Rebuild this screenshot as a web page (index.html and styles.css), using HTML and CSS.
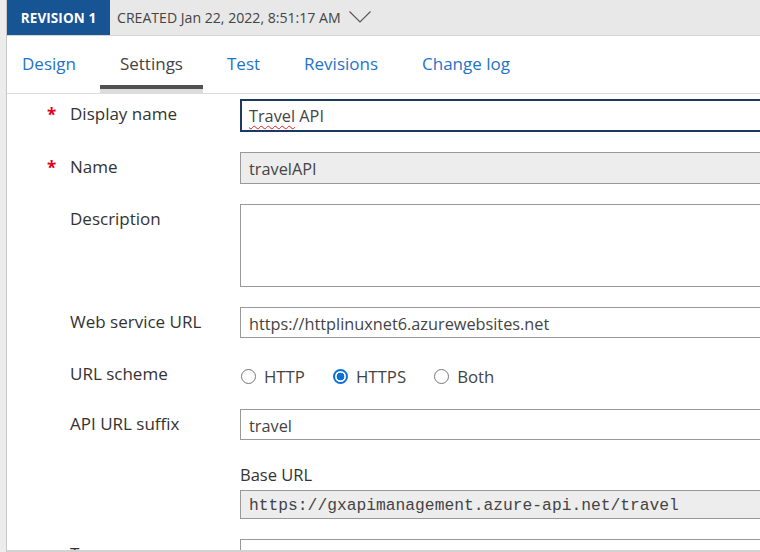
FILE: index.html
```html
<!DOCTYPE html>
<html>
<head>
<meta charset="utf-8">
<link rel="stylesheet" href="styles.css">
</head>
<body>
<div class="shell">
  <div class="main">
    <div class="header">
      <div class="badge">REVISION 1</div>
      <div class="created">CREATED Jan 22, 2022, 8:51:17 AM</div>
      <svg class="chev" width="22" height="12" viewBox="0 0 22 12"><polyline points="0.5,0.5 11,11 21.5,0.5" fill="none" stroke="#555" stroke-width="1.1"/></svg>
    </div>
    <div class="tabs">
      <div class="tab">Design</div>
      <div class="tab active">Settings</div>
      <div class="tab">Test</div>
      <div class="tab">Revisions</div>
      <div class="tab">Change log</div>
    </div>
    <div class="form">
      <div class="row">
        <div class="req">*</div>
        <div class="label">Display name</div>
        <div class="field focus"><span class="spell">Travel</span> API</div>
      </div>
      <div class="row">
        <div class="req">*</div>
        <div class="label">Name</div>
        <div class="field ro">travelAPI</div>
      </div>
      <div class="row">
        <div class="req"></div>
        <div class="label">Description</div>
        <div class="field area"></div>
      </div>
      <div class="row">
        <div class="req"></div>
        <div class="label">Web service URL</div>
        <div class="field">https://httplinuxnet6.azurewebsites.net</div>
      </div>
      <div class="row radios-row">
        <div class="req"></div>
        <div class="label">URL scheme</div>
        <div class="radios">
          <div class="opt"><span class="radio"></span>HTTP</div>
          <div class="opt"><span class="radio on"></span>HTTPS</div>
          <div class="opt"><span class="radio"></span>Both</div>
        </div>
      </div>
      <div class="row">
        <div class="req"></div>
        <div class="label">API URL suffix</div>
        <div class="stack">
          <div class="field">travel</div>
          <div class="sublabel">Base URL</div>
          <div class="field ro mono">https://gxapimanagement.azure-api.net/travel</div>
        </div>
      </div>
      <div class="row">
        <div class="req"></div>
        <div class="label">Tags</div>
        <div class="field"><span class="ph">e.g. Booking</span></div>
      </div>
    </div>
  </div>
</div>
</body>
</html>
```
FILE: styles.css
```css
html, body {
  margin: 0;
  padding: 0;
  width: 760px;
  height: 552px;
  overflow: hidden;
  background: #ececec;
  font-family: "Open Sans", "Noto Sans", sans-serif;
}
.shell {
  padding-left: 6px;
  height: 552px;
}
.main {
  height: 550px;
  background: #fff;
  border-left: 1px solid #c8c8c8;
  border-bottom: 2px solid #d2d2d2;
  overflow: hidden;
}
.header {
  height: 35px;
  background: #e8e8e8;
  border-bottom: 1px solid #d6d6d6;
  display: flex;
  align-items: center;
}
.badge {
  background: #175493;
  color: #fff;
  font-weight: 700;
  font-size: 13.5px;
  height: 35px;
  width: 103px;
  display: flex;
  align-items: center;
  justify-content: center;
  letter-spacing: 0.1px;
  flex-shrink: 0;
}
.created {
  margin-left: 7px;
  font-size: 14.1px;
  color: #444;
}
.chev {
  margin-left: 8px;
  margin-top: -1px;
}
.tabs {
  display: flex;
  height: 57px;
  border-bottom: 1px solid #dcdcdc;
  padding-left: 15px;
}
.tab {
  color: #1f73c9;
  font-size: 17px;
  padding: 0 22px;
  line-height: 56px;
  height: 49px;
  flex-shrink: 0;
}
.tab:first-child { padding-left: 0; }
.tab.active {
  color: #444;
  border-bottom: 4px solid #505050;
  box-shadow: 0 4px 0 #dcdcdc;
  padding: 0 20px;
  margin: 0 2px;
}
.form {
  padding: 5px 0 0 40px;
  display: flex;
  flex-direction: column;
  gap: 20px;
}
.row {
  display: flex;
  align-items: flex-start;
}
.req {
  width: 23px;
  flex-shrink: 0;
  color: #e3001b;
  font-size: 17px;
  font-weight: 700;
  line-height: 20px;
  padding-top: 6px;
}
.label {
  width: 170px;
  flex-shrink: 0;
  font-size: 17px;
  color: #333;
  line-height: 20px;
  padding-top: 5px;
}
.field {
  width: 540px;
  height: 31px;
  box-sizing: border-box;
  border: 1px solid #999;
  background: #fff;
  font-size: 16.3px;
  color: #444;
  line-height: 29px;
  padding-top: 2px;
  padding-left: 8px;
  flex-shrink: 0;
  white-space: nowrap;
  overflow: hidden;
}
.field.focus {
  height: 33px;
  border: 2px solid #1d3a5e;
  line-height: 29px;
  padding-top: 1px;
  padding-left: 7px;
}
.field.ro {
  background: #ededed;
  height: 32px;
}
.field.area {
  height: 83px;
}
.spell {
  text-decoration: underline wavy #e02020;
  text-decoration-thickness: 1px;
  text-underline-offset: 3px;
}
.ph {
  color: #888;
  padding-left: 28px;
}
.radios-row {
  height: 30px;
  margin-top: 1px;
}
.radios {
  display: flex;
  align-items: center;
  height: 34px;
  font-size: 16.8px;
  color: #444;
}
.opt {
  display: flex;
  align-items: center;
  margin-right: 27px;
}
.radio {
  width: 15px;
  height: 15px;
  box-sizing: border-box;
  border: 1px solid #777;
  border-radius: 50%;
  margin-right: 8px;
  margin-left: 1px;
  background: #fff;
  display: inline-block;
}
.radio.on {
  border: 2px solid #0d6fd8;
  background: radial-gradient(circle, #0d6fd8 0 3.6px, #fff 4.2px);
}
.stack {
  display: flex;
  flex-direction: column;
}
.sublabel {
  font-size: 16.5px;
  color: #333;
  line-height: 22px;
  margin-top: 24px;
  margin-bottom: 4px;
}
.field.mono {
  font-family: "Liberation Mono", "DejaVu Sans Mono", monospace;
  font-size: 16.3px;
  height: 29px;
  line-height: 27px;
  padding-top: 1px;
  color: #444;
}
```
